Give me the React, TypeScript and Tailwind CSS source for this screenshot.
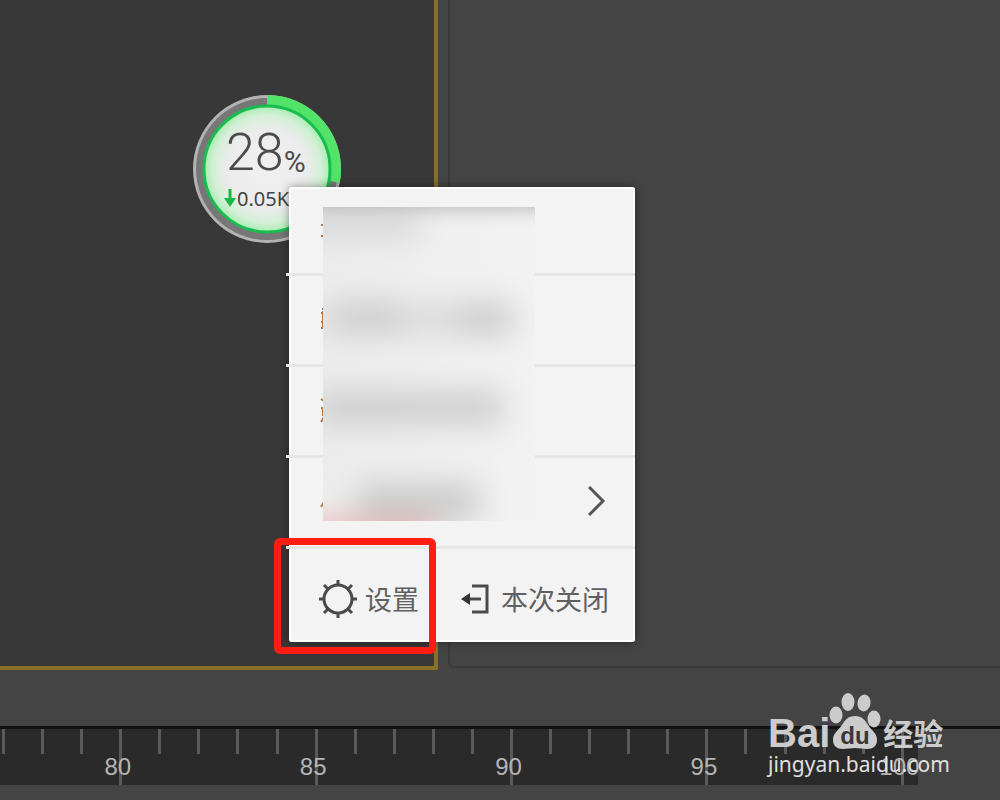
import { clsx } from 'clsx'

const FRAMES = Array.from({ length: 24 }, (_, i) => 77 + i)

// left edges of the labels that stick out from under the blurred patch
const MENU_ROWS = [
  { id: 'row-1', sliver: 'M3 3h1M1 9h3M1 20h3', arrow: false },
  { id: 'row-2', sliver: 'M2 3h2M1 7h3M2 11h2M1 16h3M1 22h3M3 5v16', arrow: false },
  { id: 'row-3', sliver: 'M1 2l3 2M1 11h3M3 11v8M1 25l3-5', arrow: false },
  { id: 'row-4', sliver: 'M1 19l3-5', arrow: true },
]

function Ruler() {
  return (
    <div className="border-t-[3px] border-[#121212]">
      <div className="flex h-14 w-[91.8%] items-start justify-between bg-[#2a2a2a] pl-[2px] pr-[14px]">
        {FRAMES.map((frame) => {
          const major = frame % 5 === 0
          return (
            <div
              key={frame}
              className={clsx('flex w-[3px] items-end justify-center bg-[#5a5a5a]', major ? 'h-14' : 'h-[25px]')}
            >
              {major ? <span className="pb-[6px] pr-[6px] text-2xl leading-6 text-[#b4b4b4]">{frame}</span> : null}
            </div>
          )
        })}
      </div>
    </div>
  )
}

function SpeedBall() {
  return (
    <div className="absolute left-[193px] top-[95px] h-[148px] w-[148px]">
      <svg viewBox="0 0 148 148" className="absolute inset-0 h-full w-full" aria-hidden="true">
        <defs>
          <radialGradient id="ball" cx="50%" cy="50%" r="50%">
            <stop offset="0" stopColor="#f0f0f0" />
            <stop offset="0.62" stopColor="#ececec" />
            <stop offset="0.85" stopColor="#d5efd8" />
            <stop offset="1" stopColor="#a8eeb0" />
          </radialGradient>
        </defs>
        <circle cx="74" cy="74" r="74" fill="#b3b3b3" />
        <circle cx="74" cy="74" r="71" fill="#777777" />
        <path d="M74 5A69 69 0 0 1 141.800 87" fill="none" stroke="#52e368" strokeWidth="10" />
        <circle cx="74" cy="74" r="63" fill="url(#ball)" stroke="#17bd4e" strokeWidth="3" />
        <path d="M37 94v11" stroke="#18b845" strokeWidth="3" />
        <path d="M31 103h12l-6 9z" fill="#18b845" />
      </svg>
      <div className="relative flex items-end pl-[33px] pt-[33px] font-[Roboto,sans-serif] text-[#4b4b4b]">
        <span className="text-[52px] font-light leading-[50px]">28</span>
        <span className="text-[30px] leading-8">%</span>
      </div>
      <p className="relative pl-11 pt-[7px] font-['Noto_Sans',sans-serif] text-xl leading-7 text-[#444444]">0.05K</p>
    </div>
  )
}

function BlurPatch() {
  return (
    <svg
      viewBox="0 0 212 314"
      className="absolute left-[34px] top-5 h-[314px] w-[212px] bg-linear-to-r from-[#ececec] to-[#f2f2f2]"
      aria-hidden="true"
    >
      <defs>
        <filter id="soft" x="-50%" y="-100%" width="200%" height="300%">
          <feGaussianBlur stdDeviation="15" />
        </filter>
        <linearGradient id="top-shade" x1="0" y1="0" x2="0" y2="1">
          <stop offset="0" stopColor="#b8b8b8" stopOpacity="0.6" />
          <stop offset="1" stopColor="#dddddd" stopOpacity="0" />
        </linearGradient>
      </defs>
      <g filter="url(#soft)">
        <rect x="-20" y="0" width="116" height="30" fill="#d6d6d6" />
        <rect x="-4" y="96" width="196" height="32" fill="#dadada" />
        <rect x="16" y="94" width="60" height="34" fill="#cdcdcd" />
        <rect x="136" y="96" width="50" height="32" fill="#cbcbcb" />
        <rect x="-8" y="184" width="188" height="34" fill="#cecece" />
        <rect x="34" y="276" width="122" height="38" fill="#cccccc" />
        <rect x="-20" y="314" width="134" height="18" fill="#e9a8a8" />
      </g>
      <rect width="212" height="20" fill="url(#top-shade)" />
    </svg>
  )
}

function BallMenu() {
  return (
    <div className="absolute left-[289px] top-[187px] w-[346px] rounded-[3px] bg-[#f3f3f3] shadow-[inset_0_0_0_2px_#ffffff,0_0_10px_#00000066]">
      {MENU_ROWS.map((row) => (
        <div key={row.id} className="group -ml-[3px] border-b-[3px] border-[#e6e6e6]">
          <button
            type="button"
            aria-label={row.id}
            className="flex h-[88px] w-full items-center justify-between pl-[34px] pr-[29px] group-first:h-[86px]"
          >
            <svg viewBox="0 0 4 28" className="h-7 w-1" fill="none" stroke="#b07a4c" strokeWidth="2" aria-hidden="true">
              <path d={row.sliver} />
            </svg>
            {row.arrow ? (
              <svg viewBox="0 0 18 32" className="h-8 w-[18px]" fill="none" stroke="#555555" strokeWidth="3" aria-hidden="true">
                <path d="M1 1l14 14L1 29" />
              </svg>
            ) : null}
          </button>
        </div>
      ))}
      <div className="flex h-[93px] items-center justify-between pl-[30px] pr-[26px] pt-[6px] text-[27px] leading-9 text-[#606060]">
        <button type="button" className="flex items-center gap-2">
          <svg viewBox="0 0 38 38" className="h-[38px] w-[38px]" fill="none" stroke="#4a4a4a" strokeWidth="3" aria-hidden="true">
            <circle cx="19" cy="19" r="14" />
            <path d="M19 0v6M19 32v6M0 19h6M32 19h6M5 5l5 5M28 28l5 5M33 5l-5 5M10 28l-5 5" />
          </svg>
          <span className="pt-1">设置</span>
        </button>
        <button type="button" className="flex items-center gap-3">
          <svg viewBox="0 0 28 30" className="h-[30px] w-7" fill="none" stroke="#4a4a4a" strokeWidth="3" aria-hidden="true">
            <path d="M11 2h15v26H11" />
            <path d="M7 15h13" />
            <path d="M0 15l9-6v12z" fill="#333333" stroke="none" />
          </svg>
          <span className="pt-1">本次关闭</span>
        </button>
      </div>
      <BlurPatch />
    </div>
  )
}

function Watermark() {
  return (
    <div className="absolute bottom-[22px] right-[54px] w-[178px] text-[#cccccc]">
      <div className="flex h-[57px] items-end">
        <span className="text-[40px] font-bold leading-[34px]">Bai</span>
        <div className="relative h-[57px] w-[53px]">
          <svg viewBox="0 0 53 57" className="h-full w-full overflow-visible" fill="currentColor" aria-hidden="true">
            <ellipse cx="6" cy="22" rx="6.500" ry="8.500" />
            <ellipse cx="18" cy="9" rx="6.500" ry="9" />
            <ellipse cx="34" cy="10" rx="6.500" ry="8.500" transform="rotate(10 34 10)" />
            <ellipse cx="44" cy="26" rx="6.500" ry="8.500" />
            <path d="M25 23c-7 0-10 4-13 9-4 6-9 8-9 15 0 6 4 9 10 9 4 0 8-1 12-1s8 1 12 1c6 0 10-3 10-9 0-7-5-9-9-15-3-5-6-9-13-9z" />
          </svg>
          <span className="absolute bottom-0 left-[10px] text-2xl font-bold leading-7 text-[#383838]">du</span>
        </div>
        <span className="text-[30px] font-bold leading-[30px]">经验</span>
      </div>
      <p className="font-['Noto_Sans',sans-serif] text-[21px] leading-7 text-[#e0e0e0]">jingyan.baidu.com</p>
    </div>
  )
}

export default function App() {
  return (
    <main className="relative flex min-h-screen flex-col overflow-hidden bg-[#444444] font-['Liberation_Sans','Noto_Sans_CJK_SC',sans-serif]">
      <div className="grid flex-1 grid-cols-[7fr_9fr]">
        <div className="border-b-4 border-r-4 border-[#87712a] bg-[#383838]" />
        <div className="mb-[2px] ml-[10px] rounded-bl-md border-b-2 border-l-2 border-[#3a3a3a]" />
      </div>
      <div className="pb-[15px] pt-14">
        <Ruler />
      </div>

      <SpeedBall />
      <BallMenu />
      <div className="pointer-events-none absolute left-[274px] top-[538px] h-[116px] w-[162px] rounded-md border-[7px] border-[#ff1d12]" />
      <Watermark />
    </main>
  )
}
